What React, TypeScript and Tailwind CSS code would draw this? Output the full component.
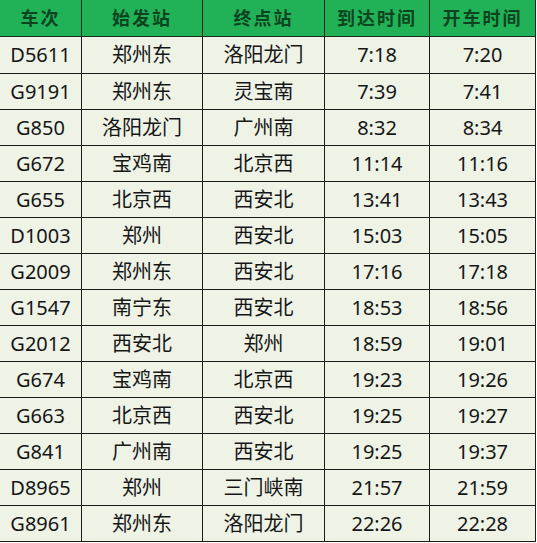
import React from "react";

const rows: [string, string, string, string, string][] = [
  ["D5611", "郑州东", "洛阳龙门", "7:18", "7:20"],
  ["G9191", "郑州东", "灵宝南", "7:39", "7:41"],
  ["G850", "洛阳龙门", "广州南", "8:32", "8:34"],
  ["G672", "宝鸡南", "北京西", "11:14", "11:16"],
  ["G655", "北京西", "西安北", "13:41", "13:43"],
  ["D1003", "郑州", "西安北", "15:03", "15:05"],
  ["G2009", "郑州东", "西安北", "17:16", "17:18"],
  ["G1547", "南宁东", "西安北", "18:53", "18:56"],
  ["G2012", "西安北", "郑州", "18:59", "19:01"],
  ["G674", "宝鸡南", "北京西", "19:23", "19:26"],
  ["G663", "北京西", "西安北", "19:25", "19:27"],
  ["G841", "广州南", "西安北", "19:25", "19:37"],
  ["D8965", "郑州", "三门峡南", "21:57", "21:59"],
  ["G8961", "郑州东", "洛阳龙门", "22:26", "22:28"],
];

const headers = ["车次", "始发站", "终点站", "到达时间", "开车时间"];

const cols = "grid grid-cols-[82px_121px_122px_105px_106px]";

export default function App() {
  return (
    <div className="w-[537px] h-[543px] bg-white overflow-hidden font-['Noto_Sans','Noto_Sans_CJK_SC',sans-serif]">
      <div className="w-[536px]">
        <div className={`${cols} h-[37px] bg-[#21b258]`}>
          {headers.map((h) => (
            <div
              key={h}
              className="flex items-center justify-center border-r border-b border-[#1c2a1c] text-[18px] font-bold tracking-[2px] text-[#0c4420]"
            >
              {h}
            </div>
          ))}
        </div>
        {rows.map((r, i) => (
          <div key={r[0]} className={`${cols} ${i === 0 ? "h-[37px]" : "h-[36px]"} bg-[#eef3e6]`}>
            {r.map((c, j) => (
              <div
                key={j}
                className="flex items-center justify-center border-r border-b border-[#1c1c1c] text-[20px] leading-none text-[#161616]"
              >
                {c}
              </div>
            ))}
          </div>
        ))}
      </div>
    </div>
  );
}
